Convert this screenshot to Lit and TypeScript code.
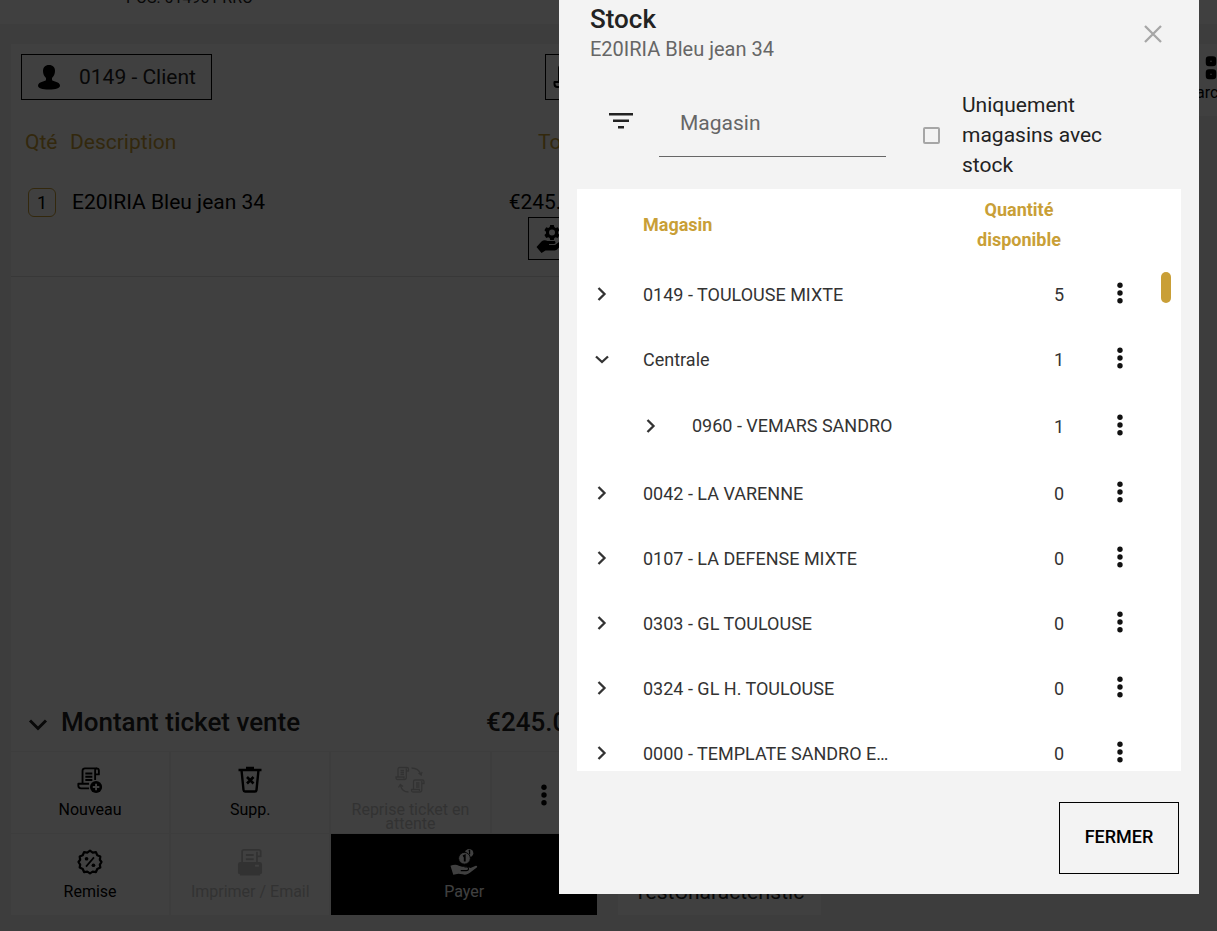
import { LitElement, html, css, svg, nothing } from "lit";
import { customElement, state } from "lit/decorators.js";

interface StockRow {
  id: string;
  name: string;
  qty: number;
  open?: boolean;
  child?: boolean;
}

const ROWS: StockRow[] = [
  { id: "r1", name: "0149 - TOULOUSE MIXTE", qty: 5 },
  { id: "r2", name: "Centrale", qty: 1, open: true },
  { id: "r3", name: "0960 - VEMARS SANDRO", qty: 1, child: true },
  { id: "r4", name: "0042 - LA VARENNE", qty: 0 },
  { id: "r5", name: "0107 - LA DEFENSE MIXTE", qty: 0 },
  { id: "r6", name: "0303 - GL TOULOUSE", qty: 0 },
  { id: "r7", name: "0324 - GL H. TOULOUSE", qty: 0 },
  { id: "r8", name: "0000 - TEMPLATE SANDRO ECOMMERCE", qty: 0 },
];

const scroll = svg`
  <path d="M7 18V5a2.5 2.5 0 0 1 2.500-2.500H22a2.500 2.500 0 0 1 2.500 2.500v4H20.500M20.500 15V4.500a2 2 0 0 1 2-2M14 24H5.500A3 3 0 0 1 2.500 21V19H14" />
  <path d="M10 8h7.500M10 11.500h7.500M10 15h7.500" />`;

const icons = {
  user: html`<svg class="ic" viewBox="0 0 24 26" width="24" height="26" aria-hidden="true">
    <path d="M12 1c4 0 6 2.500 6 6 0 3-1.200 5.300-3 7v1.500c0 1 1 1.500 3 2 3 .8 5 2 5 4.200 0 2.300-4 3.800-11 3.800S1 24 1 21.700c0-2.200 2-3.400 5-4.200 2-.5 3-1 3-2V14c-1.800-1.700-3-4-3-7 0-3.500 2-6 6-6z" fill="currentColor"/></svg>`,
  ticket: html`<svg class="ic line" viewBox="0 0 28 28" width="28" height="28" aria-hidden="true">${scroll}</svg>`,
  service: html`<svg class="ic" viewBox="0 0 32 30" width="32" height="30" aria-hidden="true">
    <path d="M14.200 1h3.600l.5 2.100 1.400.8 2.100-.7 1.800 3-1.600 1.500v1.700l1.600 1.500-1.800 3-2.100-.7-1.400.8-.5 2h-3.600l-.5-2-1.400-.8-2.100.7-1.800-3L10 9.400V7.700L8.400 6.200l1.800-3 2.100.7 1.400-.8zM16 5.600a3 3 0 1 0 0 6 3 3 0 0 0 0-6z" fill="currentColor" fill-rule="evenodd"/>
    <path d="M.5 23l5-5.500c1.500-1.300 4-1.500 6-.5h6.500c2 0 2 2.800 0 3h-5v1h6l6-4.500c2-1.300 4 .8 2.500 2.500L21 25.500c-1 .8-2 1-3 1H9.500L5.500 29z" fill="currentColor"/></svg>`,
  down: html`<svg class="ic" viewBox="0 -5 20 19" width="20" height="19" aria-hidden="true">
    <path d="M2 2.500l8 8 8-8" fill="none" stroke="currentColor" stroke-width="3"/></svg>`,
  fresh: html`<svg class="ic line" viewBox="0 0 30 30" width="28" height="30" aria-hidden="true">${scroll}
    <circle cx="21.500" cy="22.500" r="6.500" class="solid"/><path class="cut" d="M18 22.500h7M21.500 19v7"/></svg>`,
  trash: html`<svg class="ic line" viewBox="0 0 26 28" width="26" height="28" aria-hidden="true">
    <path d="M1.500 4h23M9 2h8M4.500 4l2 20c.1 1 .8 1.500 1.500 1.500h10c.8 0 1.400-.6 1.500-1.500l2-20" stroke-width="2.400"/>
    <path d="M10 11l6.500 6.500M16.500 11L10 17.500" stroke-width="2.600"/></svg>`,
  resume: html`<svg class="ic thin" viewBox="0 0 30 28" width="30" height="28" aria-hidden="true">
    <path d="M3 11V3a1.500 1.500 0 0 1 1.500-1.500h7.500a1.500 1.500 0 0 1 1.500 1.500v2h-2.200v6.500a2 2 0 0 1-2 2H2.500a1.500 1.500 0 0 1-1.500-1.500V11h8v1.500M5.500 4.500h3.500M5.500 6.500h3.500M5.500 8.500h3.500M11.300 5V2.500"/>
    <path d="M18.500 23.500v-8a1.500 1.500 0 0 1 1.500-1.500h7.500a1.500 1.500 0 0 1 1.500 1.500v2h-2.200V24a2 2 0 0 1-2 2H18a1.500 1.500 0 0 1-1.500-1.500v-1h8V25M21 17h3.500M21 19h3.500M21 21h3.500M26.800 17.500V15"/>
    <path d="M16.500 2c4.500 0 8 2.500 9.500 6.500M23.500 7l2.700 2.200L27 5.800M13.500 26c-4 0-7-2.500-8-6.500M3.500 21.500l1.800-3 2.800 2"/></svg>`,
  discount: html`<svg class="ic line" viewBox="0 0 28 28" width="26" height="26" aria-hidden="true">
    <path stroke-width="2.400" d="M14 1.800l2.900 2.100 3.500-.5 1.400 3.300 3.300 1.400-.5 3.500L26.400 14l-1.800 2.900.5 3-3.300 1.600-1.400 3.300-3.500-.5L14 26.200l-2.900-1.900-3.500.5-1.400-3.300-3.300-1.600.5-3L1.600 14l1.800-2.400-.5-3.500 3.300-1.400 1.400-3.300 3.500.5z"/>
    <path d="M18.300 9l-8.600 10" stroke-width="1.800"/><circle cx="10.300" cy="10.500" r="2" class="dot"/><circle cx="17.700" cy="17.500" r="2" class="dot"/></svg>`,
  print: html`<svg class="ic line" viewBox="0 0 28 30" width="26" height="28" aria-hidden="true">
    <path d="M5.500 15V4a2 2 0 0 1 2-2h16a2 2 0 0 1 2 2v5H21.500v6M21.500 9V4M9.500 7.500h8.500M9.500 12h8.500"/>
    <path class="dot" d="M3.500 15h21a2.500 2.500 0 0 1 2.500 2.500v9a1.500 1.500 0 0 1-1.500 1.500H25v1.500H3V28h-.5A1.500 1.500 0 0 1 1 26.500v-9A2.500 2.500 0 0 1 3.500 15z"/>
    <path class="cut" d="M19.500 19h4"/></svg>`,
  pay: html`<svg class="ic" viewBox="0 0 30 30" width="28" height="30" aria-hidden="true">
    <path d="M.5 19c3-1 6-1.700 9 0l3.500 1.200h5l4 1.300 5-2.300c2-.6 2.700.6 1.700 1.600L22 26c-3 2.400-5.500 3-8.500 2.200L9 27.500l-5.500 1.200z" fill="currentColor"/>
    <path d="M11.500 24.300h6c2.800-.2 3.200-3 1-3.900h-3" stroke="#000" stroke-width="1.200" fill="none"/>
    <circle cx="20.500" cy="5.500" r="4.500" fill="currentColor"/><path d="M20 3.500l1-.8v4" stroke="#000" stroke-width="1.300" fill="none"/>
    <circle cx="15.500" cy="11" r="6.300" fill="currentColor" stroke="#000"/><path d="M14 9l1.800-1v6.500" stroke="#000" stroke-width="2" fill="none"/></svg>`,
  more: html`<svg class="ic" viewBox="0 0 8 22" width="8" height="22" aria-hidden="true">
    <g fill="currentColor"><circle cx="4" cy="3.300" r="2.700"/><circle cx="4" cy="11" r="2.700"/><circle cx="4" cy="18.700" r="2.700"/></g></svg>`,
  grid: html`<svg class="ic" viewBox="0 0 26 26" width="26" height="26" aria-hidden="true">
    <g fill="none" stroke="currentColor" stroke-width="4.500"><rect x="3" y="3.500" width="6" height="5.500" rx="1"/><rect x="16" y="3.500" width="6" height="5.500" rx="1"/><rect x="3" y="16.500" width="6" height="5.500" rx="1"/><rect x="16" y="16.500" width="6" height="5.500" rx="1"/></g></svg>`,
  close: html`<svg class="ic" viewBox="0 0 18 18" width="18" height="18" aria-hidden="true">
    <path d="M1 1l16 16M17 1L1 17" stroke="currentColor" stroke-width="2.300" fill="none"/></svg>`,
  filter: html`<svg class="ic" viewBox="0 0 24 16" width="24" height="16" aria-hidden="true">
    <path d="M0 0h24v2.500H0zM4 6.500h16V9H4zM9 13h6v2.500H9z" fill="currentColor"/></svg>`,
  right: html`<svg class="ic" viewBox="0 0 14 14" width="14" height="14" aria-hidden="true">
    <path d="M3.500 1l6 6-6 6" fill="none" stroke="currentColor" stroke-width="2.300"/></svg>`,
  expand: html`<svg class="ic" viewBox="0 0 14 14" width="14" height="14" aria-hidden="true">
    <path d="M1 4.500l6 5.500 6-5.500" fill="none" stroke="currentColor" stroke-width="2.300"/></svg>`,
};

const shared = css`
  *, *::before, *::after { box-sizing: border-box; }
  button { font: inherit; color: inherit; background: none; border: 0; padding: 0; margin: 0; cursor: pointer; }
  h1, h2, p { margin: 0; font-weight: 400; }
  .ic { display: block; flex: none; }
`;

@customElement("pos-ticket")
class PosTicket extends LitElement {
  static styles = [shared, css`
    :host { display: flex; flex-direction: column; background: #fff; }
    .top { display: flex; justify-content: space-between; padding: 10px; }
    .boxed { display: flex; align-items: center; border: 1px solid #000; height: 46px; color: #000; }
    .client { gap: 18px; padding: 0 15px; color: #222; }
    .client .ic { color: #000; }
    .other { padding: 0 6px; }
    .line { fill: none; stroke: currentColor; stroke-width: 2; stroke-linejoin: round; }
    .thin { fill: none; stroke: currentColor; stroke-width: 1.3; }
    .solid { fill: #000; stroke: none; }
    .dot { fill: currentColor; stroke: none; }
    .cut { stroke: #fff; stroke-width: 2; }
    table { width: 100%; border-collapse: collapse; border-bottom: 1px solid #e0e0e0; line-height: 30px; }
    th { color: #c99f37; font-weight: 400; text-align: left; height: 64px; padding: 0; }
    td { padding: 0; height: 43px; vertical-align: bottom; color: #000; }
    .q { width: 59px; padding-left: 14px; }
    td.q { padding-left: 17px; }
    td.d { padding-left: 2px; }
    .r { text-align: right; padding-right: 12px; }
    .qty { display: block; width: 28px; height: 29px; border: 1px solid #c99f37; border-radius: 6px; font-size: 18px; line-height: 27px; }
    td.act { height: 59px; vertical-align: top; padding-right: 21px; }
    .act .boxed { margin-left: auto; height: 43px; padding: 0 7px; }
    .space { flex: 1; }
    .total { display: flex; align-items: center; gap: 13px; padding: 0 15px 0 17px; height: 58px; font-size: 26px; }
    .total h2 { font-size: 26px; font-weight: 500; flex: 1; }
    .total strong { font-weight: 500; }
    .actions { display: grid; grid-template-columns: 3fr 3fr 3fr 2fr; grid-auto-rows: 81px; gap: 1px 2px; background: #f3f3f3; padding-top: 1px; }
    .a { display: flex; flex-direction: column; align-items: center; background: #fff; color: #000; font-size: 16px; line-height: 14px; padding-top: 14px; gap: 9px; }
    .a:disabled { color: #c8c8c8; cursor: default; }
    .a .pic { height: 28px; display: flex; align-items: center; }
    .a.dots { justify-content: center; padding: 4px 0 0; }
    .pay { grid-column: span 2; background: #000; color: #fff; }
  `];

  render() {
    return html`
      <div class="top">
        <button class="boxed client">${icons.user}<span>0149 - Client</span></button>
        <button class="boxed other" aria-label="Ticket">${icons.ticket}</button>
      </div>
      <table>
        <thead><tr><th class="q">Qté</th><th>Description</th><th class="r">Total</th></tr></thead>
        <tbody>
          <tr><td class="q"><button class="qty">1</button></td><td class="d">E20IRIA Bleu jean 34</td><td class="r">€245.00</td></tr>
          <tr><td colspan="3" class="act"><button class="boxed" aria-label="Services">${icons.service}</button></td></tr>
        </tbody>
      </table>
      <div class="space"></div>
      <div class="total">${icons.down}<h2>Montant ticket vente</h2><strong>€245.00</strong></div>
      <div class="actions">
        <button class="a"><span class="pic">${icons.fresh}</span><span>Nouveau</span></button>
        <button class="a"><span class="pic">${icons.trash}</span><span>Supp.</span></button>
        <button class="a" disabled><span class="pic">${icons.resume}</span><span>Reprise ticket en attente</span></button>
        <button class="a dots" aria-label="Plus">${icons.more}</button>
        <button class="a"><span class="pic">${icons.discount}</span><span>Remise</span></button>
        <button class="a" disabled><span class="pic">${icons.print}</span><span>Imprimer / Email</span></button>
        <button class="a pay"><span class="pic">${icons.pay}</span><span>Payer</span></button>
      </div>`;
  }
}

@customElement("stock-dialog")
class StockDialog extends LitElement {
  @state() private onlyStock = false;

  static styles = [shared, css`
    :host { display: flex; flex-direction: column; background: #f3f3f3; color: #222; padding: 0 18px 20px; }
    header { display: flex; justify-content: space-between; padding: 3px 19px 0 13px; height: 77px; }
    h1 { font-size: 26px; font-weight: 500; line-height: 32px; }
    header p { color: #666; font-size: 20px; line-height: 28px; }
    header button { color: #a6a6a6; align-self: flex-start; padding-top: 22px; }
    .filters { display: flex; align-items: center; height: 112px; padding: 0 44px 0 32px; }
    .filters .ic { margin-bottom: 24px; }
    .field { flex: 1 1 227px; margin: 0 37px 20px 26px; }
    .field input { display: block; width: 100%; font: inherit; height: 68px; border: 0; border-bottom: 1px solid #666; background: none; padding: 0 21px; outline: none; }
    .field input::placeholder { color: #666; opacity: 1; }
    label { display: flex; align-items: center; gap: 22px; flex: 0 1 214px; line-height: 30px; padding-top: 4px; }
    label span { flex: 1; padding-right: 30px; }
    .check { appearance: none; flex: none; width: 17px; height: 17px; margin: 0; border: 2px solid #a6a6a6; border-radius: 2px; }
    .check:checked { background: #c99f37; border-color: #c99f37; }
    .list { flex: 1; min-height: 0; overflow: hidden; background: #fff; position: relative; }
    .thumb { position: absolute; top: 83px; right: 10px; width: 10px; height: 31px; border-radius: 5px; background: #c99f37; }
    table { width: 100%; border-collapse: collapse; table-layout: fixed; font-size: 18px; }
    th { height: 73px; padding: 0 0 2px; color: #c99f37; font-weight: 700; line-height: 30px; text-align: left; }
    th.n { text-align: center; }
    td { height: 65px; padding: 0; color: #333; }
    tr.child td { height: 69px; }
    .e { width: 66px; }
    .n { width: 110px; }
    .m { width: 107px; }
    td.e { padding-left: 18px; }
    td.name { white-space: nowrap; overflow: hidden; text-overflow: ellipsis; padding-right: 68px; }
    .nest { display: flex; align-items: center; gap: 34px; }
    .child td.name { padding: 0 0 2px 1px; }
    td.n { text-align: right; padding-right: 10px; }
    td.m { padding-left: 42px; color: #111; }
    footer { display: flex; justify-content: flex-end; padding: 31px 2px 0; }
    .closebtn { border: 1px solid #000; width: 120px; height: 72px; padding-bottom: 3px; font-size: 18px; font-weight: 500; color: #000; text-transform: uppercase; }
  `];

  private row(r: StockRow) {
    const toggle = html`<button aria-label="Afficher ${r.name}" aria-expanded=${r.open ? "true" : "false"}>${r.open ? icons.expand : icons.right}</button>`;
    return html`<tr class=${r.child ? "child" : "root"}>
      <td class="e">${r.child ? nothing : toggle}</td>
      <td class="name">${r.child ? html`<span class="nest">${toggle}<span>${r.name}</span></span>` : r.name}</td>
      <td class="n">${r.qty}</td>
      <td class="m"><button aria-label="Options ${r.name}">${icons.more}</button></td>
    </tr>`;
  }

  render() {
    const rows = this.onlyStock ? ROWS.filter((r) => r.qty > 0) : ROWS;
    return html`
      <header>
        <div><h1>Stock</h1><p>E20IRIA Bleu jean 34</p></div>
        <button aria-label="Fermer">${icons.close}</button>
      </header>
      <div class="filters">
        ${icons.filter}
        <div class="field"><input type="text" placeholder="Magasin" aria-label="Magasin" /></div>
        <label for="only"><input id="only" class="check" type="checkbox" .checked=${this.onlyStock}
          @change=${(e: Event) => (this.onlyStock = (e.target as HTMLInputElement).checked)} /><span>Uniquement magasins avec stock</span></label>
      </div>
      <div class="list">
        <table>
          <thead><tr><th class="e"></th><th>Magasin</th><th class="n">Quantité disponible</th><th class="m"></th></tr></thead>
          <tbody>${rows.map((r) => this.row(r))}</tbody>
        </table>
        <div class="thumb"></div>
      </div>
      <footer><button class="closebtn">Fermer</button></footer>`;
  }
}

@customElement("app-root")
class AppRoot extends LitElement {
  static styles = [shared, css`
    :host { display: block; position: relative; height: 100vh; overflow: hidden; background: #f3f3f3; font-family: Roboto, "Noto Sans", sans-serif; font-size: 21px; color: #222; }
    .page { display: flex; flex-direction: column; height: 100%; }
    .bar { display: flex; align-items: flex-end; height: 24px; flex: none; overflow: hidden; background: #fff; padding: 0 126px 16px; font-size: 16px; line-height: 20px; }
    main { display: flex; flex: 1; min-height: 0; gap: 21px; padding: 20px 0 16px 11px; }
    pos-ticket { flex: 0 0 586px; }
    .side { flex: 1; min-width: 0; display: flex; flex-direction: column; justify-content: space-between; }
    .tools { display: flex; justify-content: flex-end; background: #fff; height: 72px; margin-right: -38px; }
    .tool { display: flex; flex-direction: column; align-items: center; gap: 3px; padding: 11px 4px 0; font-size: 16px; line-height: 18px; color: #000; }
    .card { background: #fff; width: 203px; padding: 12px 16px 10px; line-height: 26px; }
    .shade { position: absolute; inset: 0; background: rgba(0, 0, 0, 0.75); }
    stock-dialog { position: absolute; top: 0; right: 18px; bottom: 37px; width: min(640px, 100%); }
  `];

  render() {
    return html`
      <div class="page">
        <div class="bar"><span>POS: 014901 RRO</span></div>
        <main>
          <pos-ticket></pos-ticket>
          <div class="side">
            <div class="tools"><button class="tool">${icons.grid}<span>Parcourir</span></button></div>
            <div class="card">TestCharacteristic</div>
          </div>
        </main>
      </div>
      <div class="shade"></div>
      <stock-dialog role="dialog" aria-label="Stock"></stock-dialog>`;
  }
}
